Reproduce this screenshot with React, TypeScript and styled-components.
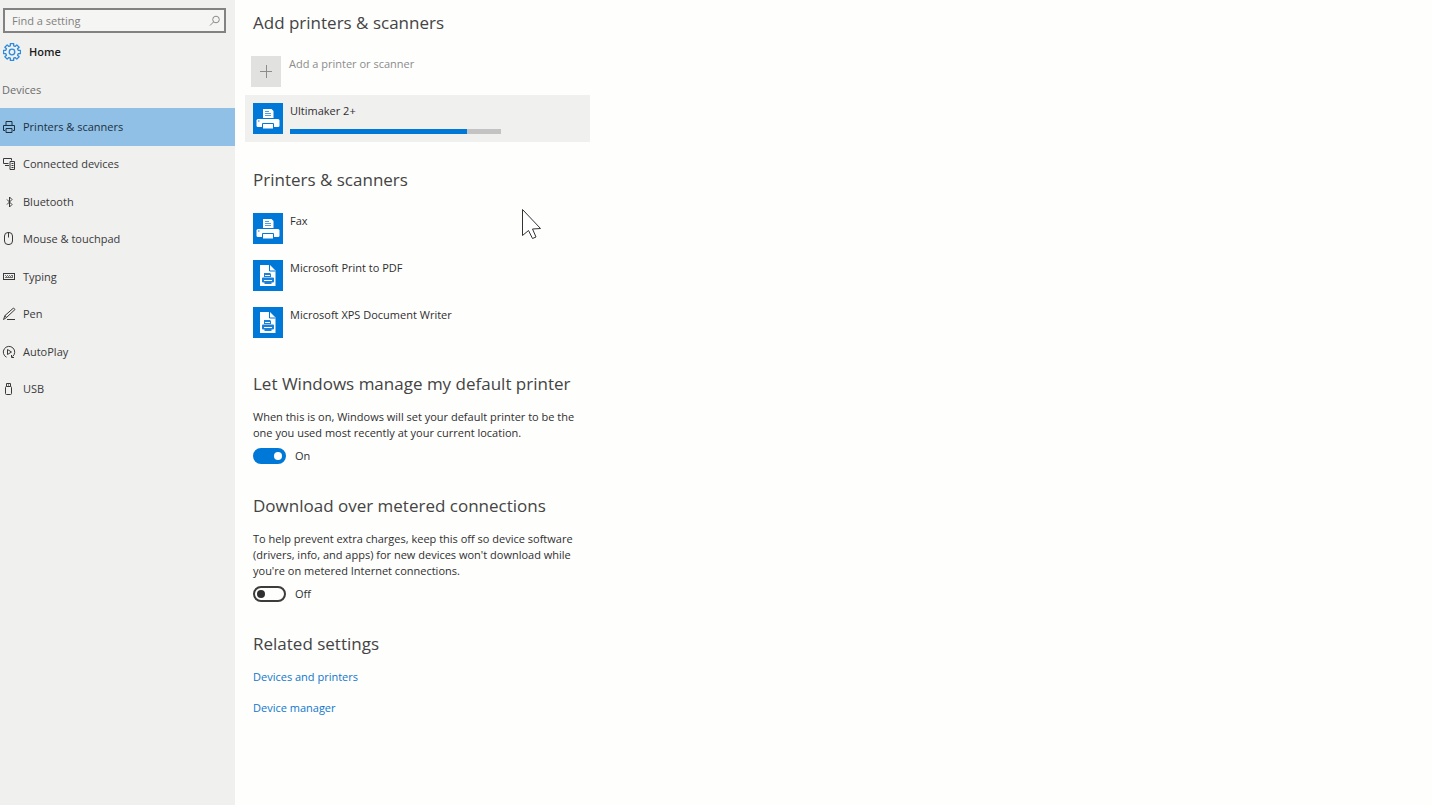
import React, { useState } from "react";
import styled, { createGlobalStyle } from "styled-components";

const GlobalStyle = createGlobalStyle`
  *, *::before, *::after { box-sizing: border-box; }
  body {
    margin: 0;
    background: #fefefd;
    color: #2f2f2f;
    font-family: "Open Sans", "Noto Sans", sans-serif;
    font-size: 11px;
    line-height: 16px;
  }
  h1, h2, p, ul { margin: 0; padding: 0; font-weight: 400; }
  ul { list-style: none; }
`;

const Page = styled.div`
  display: flex;
  min-height: 100vh;
`;

const Sidebar = styled.aside`
  flex: none;
  width: 235px;
  padding-top: 8px;
  background: #f0f0ef;
`;

const SearchBox = styled.label`
  display: flex;
  align-items: center;
  height: 25px;
  margin: 0 9px 0 3px;
  padding: 0 3px 0 7px;
  border: 2px solid #828282;
  background: #f5f5f3;
`;

const SearchInput = styled.input`
  flex: 1;
  min-width: 0;
  padding: 0;
  border: 0;
  outline: 0;
  background: transparent;
  color: #2f2f2f;
  font: inherit;
  &::placeholder { color: #808080; opacity: 1; }
`;

const HomeLink = styled.a`
  display: flex;
  align-items: center;
  gap: 8px;
  height: 20px;
  margin: 9px 0 20px;
  padding-left: 3px;
  color: #1c1c1c;
  font-weight: 600;
  text-decoration: none;
`;

const GroupTitle = styled.h2`
  margin-bottom: 10px;
  padding-left: 2px;
  color: #6c6c6c;
  font-size: 11px;
`;

const NavList = styled.ul`
  display: flex;
  flex-direction: column;
  height: 300px;
`;

const NavItem = styled.li`
  flex: 1;
  display: flex;
`;

const NavLink = styled.a<{ $active?: boolean }>`
  flex: 1;
  display: flex;
  align-items: center;
  gap: 6px;
  padding-left: 1px;
  background: ${(p) => (p.$active ? "#90c0e6" : "transparent")};
  color: ${(p) => (p.$active ? "#1d3040" : "#3a3a3a")};
  text-decoration: none;
`;

const Main = styled.main`
  flex: 1;
  display: flex;
  flex-direction: column;
  gap: 25px;
  max-width: 355px;
  padding: 10px 0 24px 10px;
`;

const Section = styled.section`
  padding-left: 8px;
`;

const Heading = styled.h2`
  margin-bottom: 12px;
  color: #444;
  font-size: 17px;
  font-weight: 400;
  line-height: 26px;
`;

const DeviceList = styled.ul`
  margin-left: -8px;
`;

const DeviceRow = styled.li<{ $selected?: boolean }>`
  display: flex;
  gap: 7px;
  height: 47px;
  padding: 8px 8px 0;
  background: ${(p) => (p.$selected ? "#f0f0ef" : "transparent")};
`;

const AddButton = styled.button`
  display: flex;
  gap: 8px;
  width: 100%;
  height: 47px;
  margin: 0 0 0 -8px;
  padding: 8px 6px 0;
  border: 0;
  background: transparent;
  color: #8c8c8c;
  font: inherit;
  text-align: left;
`;

const Tile = styled.span<{ $muted?: boolean }>`
  flex: none;
  display: block;
  width: 30px;
  height: 31px;
  background: ${(p) => (p.$muted ? "#e1e1e0" : "#0078d7")};
  svg { display: block; }
`;

const DeviceInfo = styled.div`
  display: flex;
  flex-direction: column;
  gap: 10px;
  flex: 1;
`;

const Progress = styled.progress`
  appearance: none;
  display: block;
  width: 211px;
  height: 5px;
  border: 0;
  &::-webkit-progress-bar { background: #c3c3c3; }
  &::-webkit-progress-value { background: #0078d7; }
`;

const Description = styled.p`
  margin-bottom: 3px;
  white-space: pre-line;
`;

const ToggleLabel = styled.label`
  display: flex;
  align-items: center;
  gap: 9px;
  height: 24px;
`;

const Switch = styled.input`
  appearance: none;
  display: flex;
  align-items: center;
  justify-content: flex-start;
  width: 33px;
  height: 16px;
  margin: 0;
  padding: 0 2px;
  border: 2px solid #3c3c3c;
  border-radius: 8px;
  background: #fefefd;
  &::before {
    content: "";
    width: 8px;
    height: 8px;
    border-radius: 50%;
    background: #2f2f2f;
  }
  &:checked {
    justify-content: flex-end;
    border-color: #0078d7;
    background: #0078d7;
  }
  &:checked::before { background: #fff; }
`;

const Links = styled.ul`
  display: flex;
  flex-direction: column;
  gap: 15px;
`;

const TextLink = styled.a`
  color: #0f77cc;
  text-decoration: none;
`;

const Pointer = styled.svg`
  position: absolute;
  left: 521px;
  top: 208px;
  pointer-events: none;
`;

const LineIcon = ({ children }: { children: React.ReactNode }) => (
  <svg width="16" height="16" viewBox="0 0 16 16" fill="none" stroke="currentColor" strokeWidth="1" aria-hidden="true">
    {children}
  </svg>
);

const navItems: { label: string; icon: React.ReactNode }[] = [
  {
    label: "Printers & scanners",
    icon: (
      <>
        <path d="M5 6.5V2.5h6v4M4 11.5H2.5v-5h11v5H12" />
        <path d="M5 9.5h6v4H5z" />
      </>
    ),
  },
  {
    label: "Connected devices",
    icon: (
      <>
        <path d="M7.500 7.500h-5v-5h8v2M4 9.500h4" />
        <path d="M9 5.500h4.500v8H9zM10.500 7.500h2M10.500 9.500h2M10.500 11.500h2" />
      </>
    ),
  },
  { label: "Bluetooth", icon: <path d="M6 5.500l5 5L8.500 13V3L11 5.500l-5 5" /> },
  {
    label: "Mouse & touchpad",
    icon: (
      <>
        <rect x="3.500" y="1.500" width="8" height="12" rx="3.500" />
        <path d="M7.500 1.500v5" />
      </>
    ),
  },
  {
    label: "Typing",
    icon: (
      <>
        <rect x="2.500" y="4.500" width="11" height="6" />
        <path d="M4 6.500h1m1 0h1m1 0h1m1 0h2M5 7.500h1m1 0h1m1 0h1m1 0h1M4 8.500h8" opacity="0.7" />
      </>
    ),
  },
  {
    label: "Pen",
    icon: (
      <>
        <path d="M2.500 13.500l1.500-4L12.500 2 14 3.500l-8.500 8zM4 9.500l1.500 2" />
        <path d="M6 13.500h8" />
      </>
    ),
  },
  {
    label: "AutoPlay",
    icon: (
      <>
        <path d="M5.500 13.200A5.700 5.700 0 1 1 11.500 12.600" />
        <path d="M6.500 5.500v5l4-2.500z" />
        <path d="M10.500 11v2.500h2.500" />
      </>
    ),
  },
  {
    label: "USB",
    icon: (
      <>
        <rect x="4.500" y="5.500" width="6" height="8" rx="1" />
        <path d="M5.500 5.500v-3h4v3M7 4h1" />
      </>
    ),
  },
];

const gearPath = Array.from({ length: 8 }, (_, i) => {
  const point = (radius: number, degrees: number) => {
    const a = ((degrees + i * 45) * Math.PI) / 180;
    return `${(9 + radius * Math.cos(a)).toFixed(2)} ${(9 + radius * Math.sin(a)).toFixed(2)}`;
  };
  return `${i ? "L" : "M"}${point(6.4, -15)}L${point(8.6, -11)}L${point(8.6, 11)}L${point(6.4, 15)}`;
}).join("");

const GearIcon = () => (
  <svg width="18" height="18" viewBox="0 0 18 18" fill="none" stroke="#2e8bdc" strokeWidth="1.300" strokeLinejoin="round" aria-hidden="true">
    <path d={`${gearPath}Z`} />
    <circle cx="9" cy="9" r="2.800" />
  </svg>
);

const SearchIcon = () => (
  <svg width="12" height="12" viewBox="0 0 12 12" fill="none" stroke="#8a8a8a" aria-hidden="true">
    <circle cx="7" cy="4.500" r="3.300" />
    <path d="M4.500 7L1 10.500" />
  </svg>
);

const PrinterGlyph = () => (
  <svg width="30" height="31" viewBox="0 0 30 31" aria-hidden="true">
    <path d="M10 6h8.500l2 2v7H10z" fill="#fff" />
    <path d="M12 8.500h4M12 10.500h6M12 12.500h6" stroke="#4b9fe2" />
    <path d="M5 16h20q1.500 0 1.500 1.500v5q0 1.500-1.500 1.500H5q-1.500 0-1.500-1.500v-5Q3.500 16 5 16z" fill="#fff" />
    <path d="M9.500 20.500h11v5.500h-11z" fill="#fff" stroke="#0078d7" />
    <path d="M5 18h1.500" stroke="#0078d7" />
  </svg>
);

const DocumentGlyph = () => (
  <svg width="30" height="31" viewBox="0 0 30 31" aria-hidden="true">
    <path d="M7 5h10l5.500 5.500V26H7z" fill="#fff" />
    <path d="M16.500 5v6h6" fill="none" stroke="#0078d7" />
    <path d="M11 13h6l1 1v3h-7zM10 17.500h10q1 0 1 1v3q0 1-1 1H10q-1 0-1-1v-3q0-1 1-1zM11.500 22h7v2h-7z" fill="#1a80d9" />
    <path d="M12 15.500h5M11 20.500h8" stroke="#fff" />
  </svg>
);

const PlusGlyph = () => (
  <svg width="30" height="31" viewBox="0 0 30 31" fill="none" stroke="#8c8c8c" aria-hidden="true">
    <path d="M9 15.500h12M15.500 9v13" />
  </svg>
);

const devices = [
  { name: "Fax", glyph: <PrinterGlyph /> },
  { name: "Microsoft Print to PDF", glyph: <DocumentGlyph /> },
  { name: "Microsoft XPS Document Writer", glyph: <DocumentGlyph /> },
];

const Toggle = ({ initial, title }: { initial: boolean; title: string }) => {
  const [on, setOn] = useState(initial);
  return (
    <ToggleLabel>
      <Switch type="checkbox" role="switch" aria-label={title} checked={on} onChange={() => setOn(!on)} />
      {on ? "On" : "Off"}
    </ToggleLabel>
  );
};

export default function App() {
  return (
    <Page>
      <GlobalStyle />
      <Sidebar>
        <SearchBox>
          <SearchInput type="text" placeholder="Find a setting" aria-label="Find a setting" />
          <SearchIcon />
        </SearchBox>
        <HomeLink href="#home">
          <GearIcon />
          Home
        </HomeLink>
        <GroupTitle>Devices</GroupTitle>
        <nav>
          <NavList>
            {navItems.map((item, i) => (
              <NavItem key={item.label}>
                <NavLink href="#" $active={i === 0}>
                  <LineIcon>{item.icon}</LineIcon>
                  {item.label}
                </NavLink>
              </NavItem>
            ))}
          </NavList>
        </nav>
      </Sidebar>
      <Main>
        <Section>
          <Heading>Add printers &amp; scanners</Heading>
          <AddButton type="button">
            <Tile $muted>
              <PlusGlyph />
            </Tile>
            Add a printer or scanner
          </AddButton>
          <DeviceList>
            <DeviceRow $selected>
              <Tile>
                <PrinterGlyph />
              </Tile>
              <DeviceInfo>
                Ultimaker 2+
                <Progress value={84} max={100} aria-label="Installing Ultimaker 2+" />
              </DeviceInfo>
            </DeviceRow>
          </DeviceList>
        </Section>
        <Section>
          <Heading>Printers &amp; scanners</Heading>
          <DeviceList>
            {devices.map((d) => (
              <DeviceRow key={d.name}>
                <Tile>{d.glyph}</Tile>
                <DeviceInfo>{d.name}</DeviceInfo>
              </DeviceRow>
            ))}
          </DeviceList>
        </Section>
        <Section>
          <Heading>Let Windows manage my default printer</Heading>
          <Description>
            {"When this is on, Windows will set your default printer to be the\none you used most recently at your current location."}
          </Description>
          <Toggle initial title="Let Windows manage my default printer" />
        </Section>
        <Section>
          <Heading>Download over metered connections</Heading>
          <Description>
            {"To help prevent extra charges, keep this off so device software\n(drivers, info, and apps) for new devices won't download while\nyou're on metered Internet connections."}
          </Description>
          <Toggle initial={false} title="Download over metered connections" />
        </Section>
        <Section>
          <Heading>Related settings</Heading>
          <Links>
            <li>
              <TextLink href="#devices">Devices and printers</TextLink>
            </li>
            <li>
              <TextLink href="#manager">Device manager</TextLink>
            </li>
          </Links>
        </Section>
      </Main>
      <Pointer width="22" height="34" viewBox="0 0 22 34" aria-hidden="true">
        <path d="M1.500 1.500v26l6-5 4 8 3.500-1.500-3.500-8 8-.5z" fill="#fff" stroke="#333" />
      </Pointer>
    </Page>
  );
}
